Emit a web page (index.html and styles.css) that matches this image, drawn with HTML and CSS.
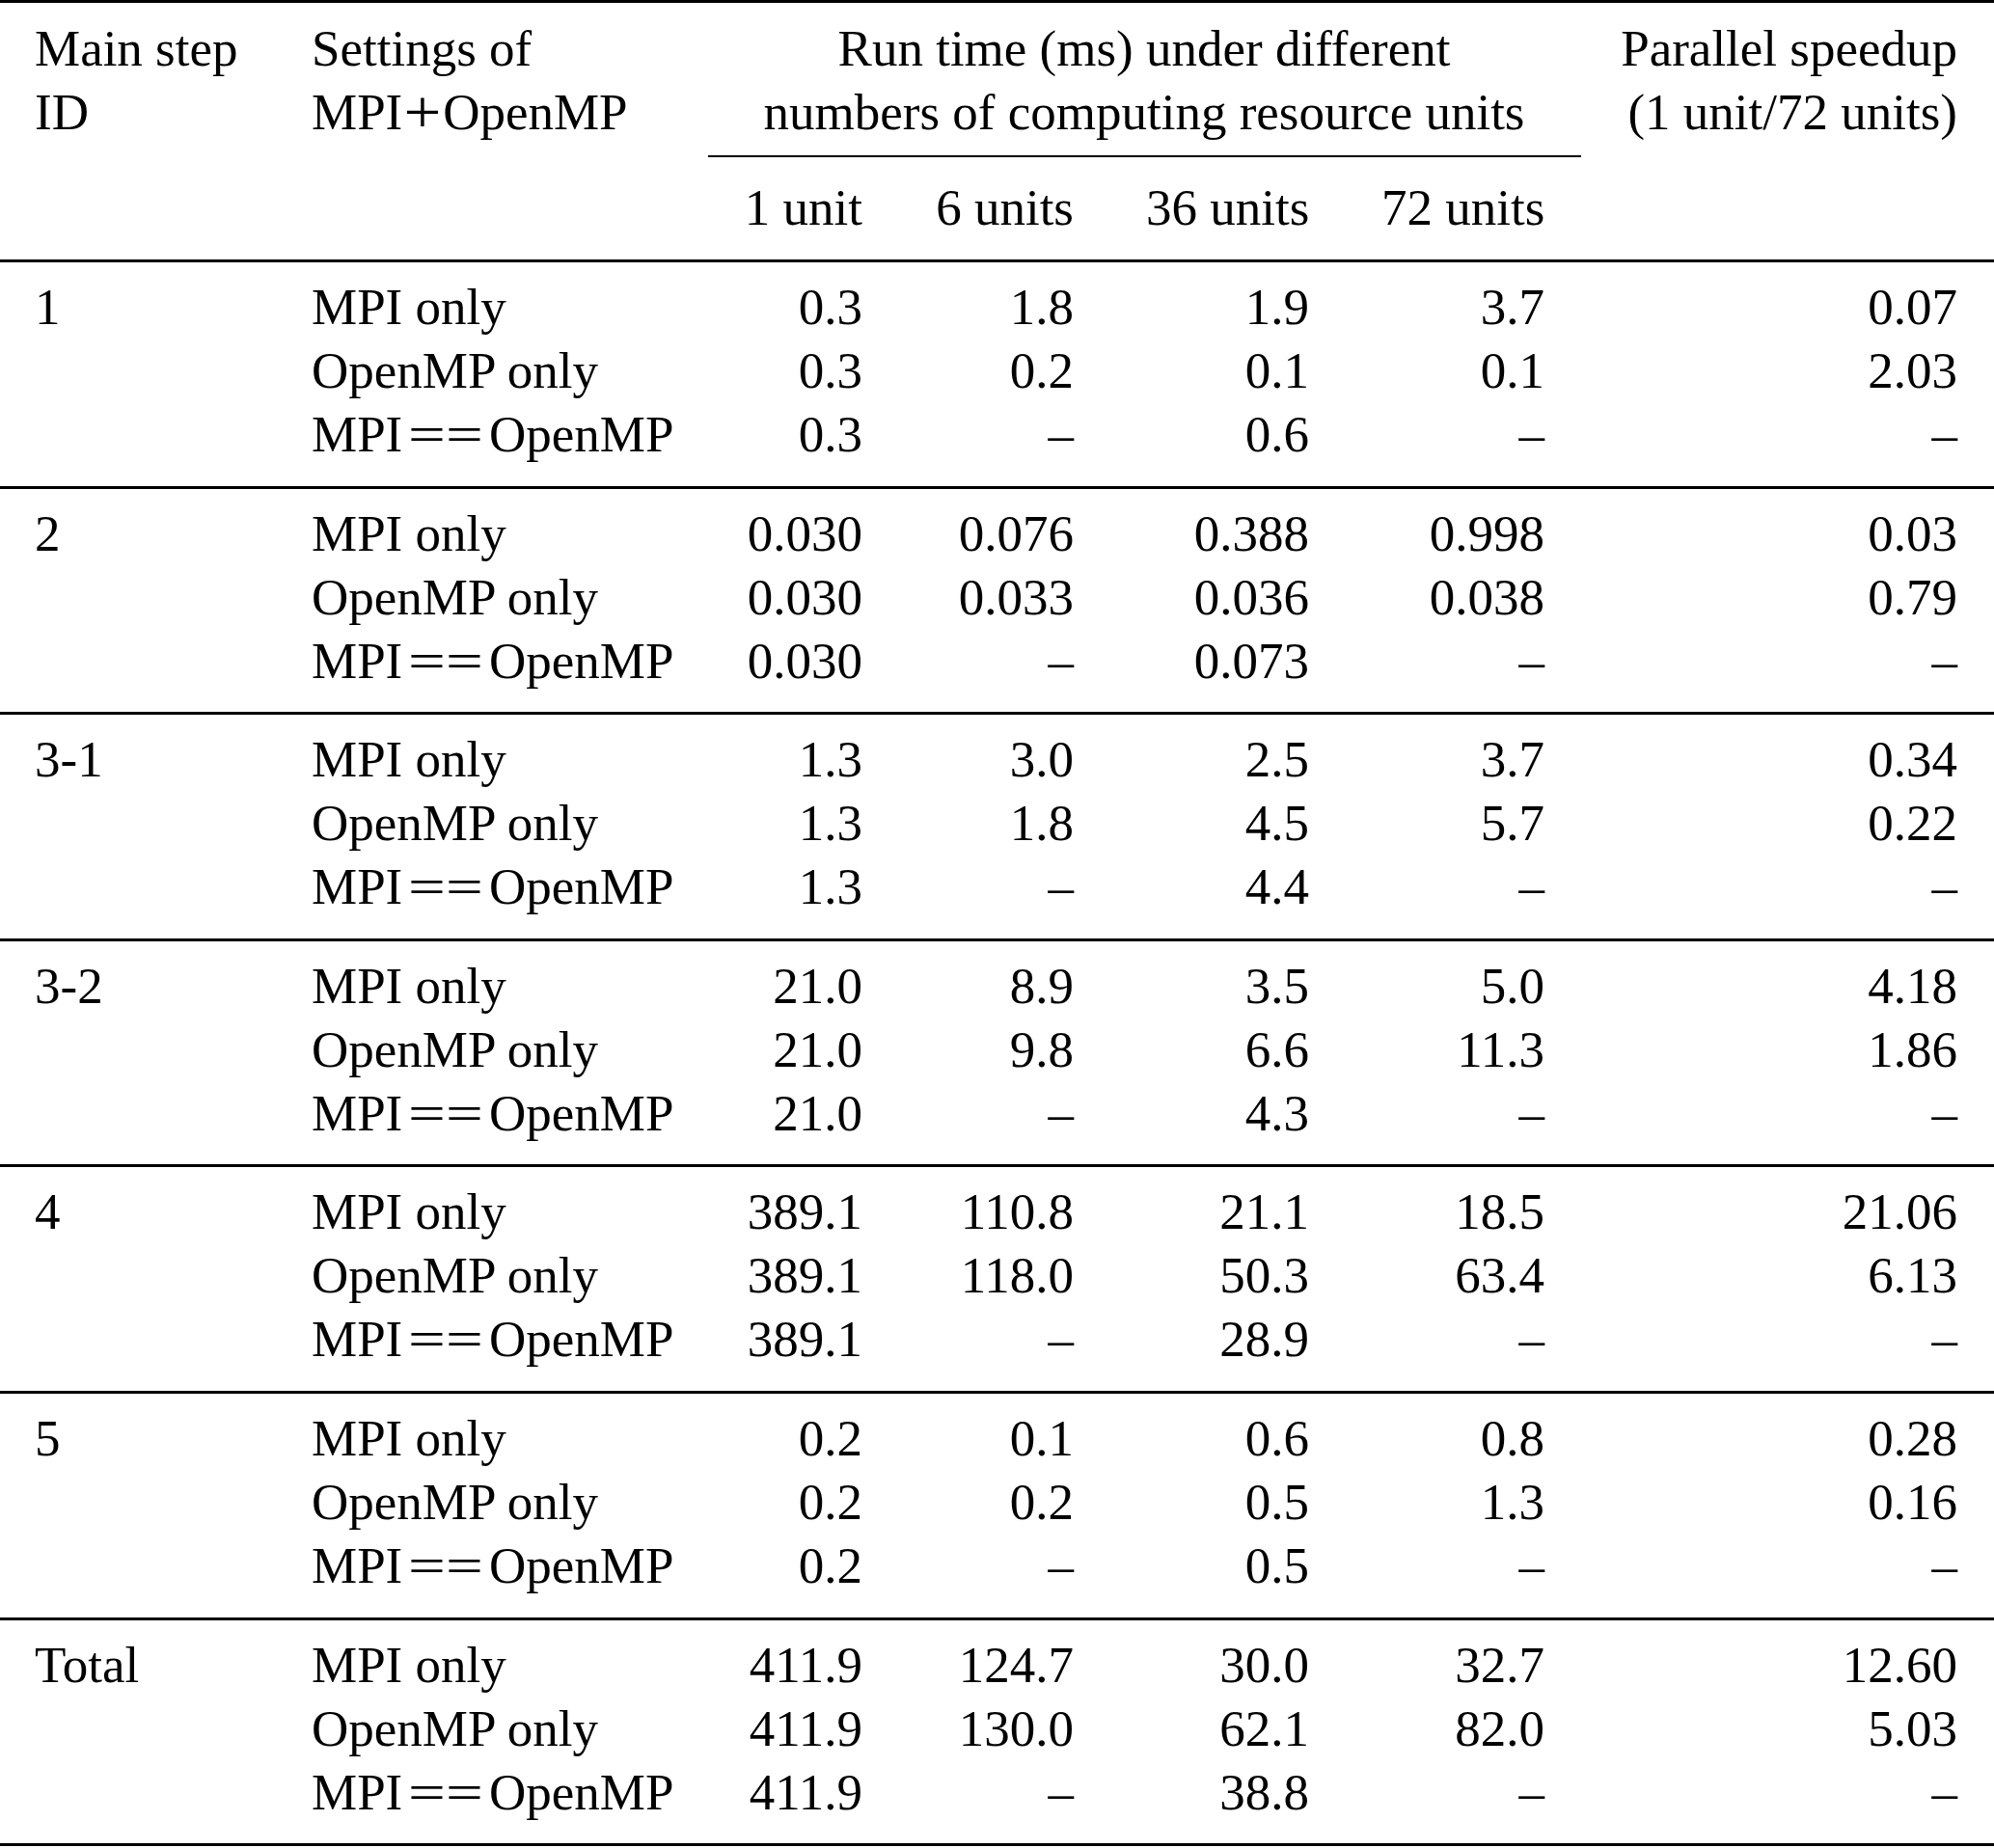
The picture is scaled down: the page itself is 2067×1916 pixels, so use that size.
FILE: index.html
```html
<!DOCTYPE html>
<html lang="en">
<head>
<meta charset="utf-8">
<title>Run time table</title>
<link rel="stylesheet" href="styles.css">
</head>
<body>
<table class="perf">
<colgroup>
<col class="c-id"><col class="c-set"><col class="c-n1"><col class="c-n6"><col class="c-n36"><col class="c-n72"><col class="c-sp">
</colgroup>
<thead>
<tr class="hdr-a">
<th class="lft" rowspan="2">Main step<br>ID</th>
<th class="lft" rowspan="2">Settings of<br>MPI<span class="op">+</span>OpenMP</th>
<th class="span" colspan="4">Run time (ms) under different<br>numbers of computing resource units</th>
<th class="num" rowspan="2">Parallel speedup<br>(1 unit/72 units)</th>
</tr>
<tr class="hdr-b">
<th class="num">1 unit</th>
<th class="num">6 units</th>
<th class="num">36 units</th>
<th class="num">72 units</th>
</tr>
</thead>
<tbody>
<tr class="first"><td class="lft">1</td><td class="lft">MPI only</td><td class="num">0.3</td><td class="num">1.8</td><td class="num">1.9</td><td class="num">3.7</td><td class="num">0.07</td></tr>
<tr><td class="lft"></td><td class="lft">OpenMP only</td><td class="num">0.3</td><td class="num">0.2</td><td class="num">0.1</td><td class="num">0.1</td><td class="num">2.03</td></tr>
<tr class="last"><td class="lft"></td><td class="lft">MPI<span class="eq">==</span>OpenMP</td><td class="num">0.3</td><td class="num">–</td><td class="num">0.6</td><td class="num">–</td><td class="num">–</td></tr>
</tbody>
<tbody>
<tr class="first"><td class="lft">2</td><td class="lft">MPI only</td><td class="num">0.030</td><td class="num">0.076</td><td class="num">0.388</td><td class="num">0.998</td><td class="num">0.03</td></tr>
<tr><td class="lft"></td><td class="lft">OpenMP only</td><td class="num">0.030</td><td class="num">0.033</td><td class="num">0.036</td><td class="num">0.038</td><td class="num">0.79</td></tr>
<tr class="last"><td class="lft"></td><td class="lft">MPI<span class="eq">==</span>OpenMP</td><td class="num">0.030</td><td class="num">–</td><td class="num">0.073</td><td class="num">–</td><td class="num">–</td></tr>
</tbody>
<tbody>
<tr class="first"><td class="lft">3-1</td><td class="lft">MPI only</td><td class="num">1.3</td><td class="num">3.0</td><td class="num">2.5</td><td class="num">3.7</td><td class="num">0.34</td></tr>
<tr><td class="lft"></td><td class="lft">OpenMP only</td><td class="num">1.3</td><td class="num">1.8</td><td class="num">4.5</td><td class="num">5.7</td><td class="num">0.22</td></tr>
<tr class="last"><td class="lft"></td><td class="lft">MPI<span class="eq">==</span>OpenMP</td><td class="num">1.3</td><td class="num">–</td><td class="num">4.4</td><td class="num">–</td><td class="num">–</td></tr>
</tbody>
<tbody>
<tr class="first"><td class="lft">3-2</td><td class="lft">MPI only</td><td class="num">21.0</td><td class="num">8.9</td><td class="num">3.5</td><td class="num">5.0</td><td class="num">4.18</td></tr>
<tr><td class="lft"></td><td class="lft">OpenMP only</td><td class="num">21.0</td><td class="num">9.8</td><td class="num">6.6</td><td class="num">11.3</td><td class="num">1.86</td></tr>
<tr class="last"><td class="lft"></td><td class="lft">MPI<span class="eq">==</span>OpenMP</td><td class="num">21.0</td><td class="num">–</td><td class="num">4.3</td><td class="num">–</td><td class="num">–</td></tr>
</tbody>
<tbody>
<tr class="first"><td class="lft">4</td><td class="lft">MPI only</td><td class="num">389.1</td><td class="num">110.8</td><td class="num">21.1</td><td class="num">18.5</td><td class="num">21.06</td></tr>
<tr><td class="lft"></td><td class="lft">OpenMP only</td><td class="num">389.1</td><td class="num">118.0</td><td class="num">50.3</td><td class="num">63.4</td><td class="num">6.13</td></tr>
<tr class="last"><td class="lft"></td><td class="lft">MPI<span class="eq">==</span>OpenMP</td><td class="num">389.1</td><td class="num">–</td><td class="num">28.9</td><td class="num">–</td><td class="num">–</td></tr>
</tbody>
<tbody>
<tr class="first"><td class="lft">5</td><td class="lft">MPI only</td><td class="num">0.2</td><td class="num">0.1</td><td class="num">0.6</td><td class="num">0.8</td><td class="num">0.28</td></tr>
<tr><td class="lft"></td><td class="lft">OpenMP only</td><td class="num">0.2</td><td class="num">0.2</td><td class="num">0.5</td><td class="num">1.3</td><td class="num">0.16</td></tr>
<tr class="last"><td class="lft"></td><td class="lft">MPI<span class="eq">==</span>OpenMP</td><td class="num">0.2</td><td class="num">–</td><td class="num">0.5</td><td class="num">–</td><td class="num">–</td></tr>
</tbody>
<tbody class="final">
<tr class="first"><td class="lft">Total</td><td class="lft">MPI only</td><td class="num">411.9</td><td class="num">124.7</td><td class="num">30.0</td><td class="num">32.7</td><td class="num">12.60</td></tr>
<tr><td class="lft"></td><td class="lft">OpenMP only</td><td class="num">411.9</td><td class="num">130.0</td><td class="num">62.1</td><td class="num">82.0</td><td class="num">5.03</td></tr>
<tr class="last"><td class="lft"></td><td class="lft">MPI<span class="eq">==</span>OpenMP</td><td class="num">411.9</td><td class="num">–</td><td class="num">38.8</td><td class="num">–</td><td class="num">–</td></tr>
</tbody>
</table>
</body>
</html>
```

FILE: styles.css
```css
html, body {
  margin: 0;
  padding: 0;
  background: #ffffff;
}

body {
  font-family: "Liberation Serif", "Times New Roman", serif;
  font-size: 53px;
  line-height: 66px;
  color: #000000;
}

.perf {
  border-collapse: separate;
  border-spacing: 0;
  table-layout: fixed;
  width: 2067px;
}

.c-id { width: 286px; }
.c-set { width: 448px; }
.c-n1 { width: 198px; }
.c-n6 { width: 219px; }
.c-n36 { width: 244px; }
.c-n72 { width: 244px; }
.c-sp { width: 428px; }

.perf th,
.perf td {
  font-weight: normal;
  vertical-align: top;
  white-space: nowrap;
  padding: 0 38px 0 37px;
}

.perf .lft { text-align: left; }
.perf .num { text-align: right; }
.perf .span { text-align: center; }

.perf tr > .lft:first-child { padding-left: 36px; }

.op {
  display: inline-block;
  transform: scale(1.3, 1.2);
  margin: 0 6px;
}

.eq {
  display: inline-block;
  transform: scaleX(1.3);
  margin: 0 15px;
}

/* header */
.hdr-a th {
  border-top: 3px solid #000000;
  padding-top: 14px;
}

.hdr-a .span {
  padding-bottom: 12px;
  border-bottom: 2px solid #000000;
}

.hdr-b th {
  padding-top: 19px;
  padding-bottom: 21px;
}

/* body groups */
tbody tr.first td {
  border-top: 3px solid #000000;
  padding-top: 13px;
}

tbody tr.last td {
  padding-bottom: 20.6px;
}

tbody.final tr.last td {
  border-bottom: 3px solid #000000;
}
```
